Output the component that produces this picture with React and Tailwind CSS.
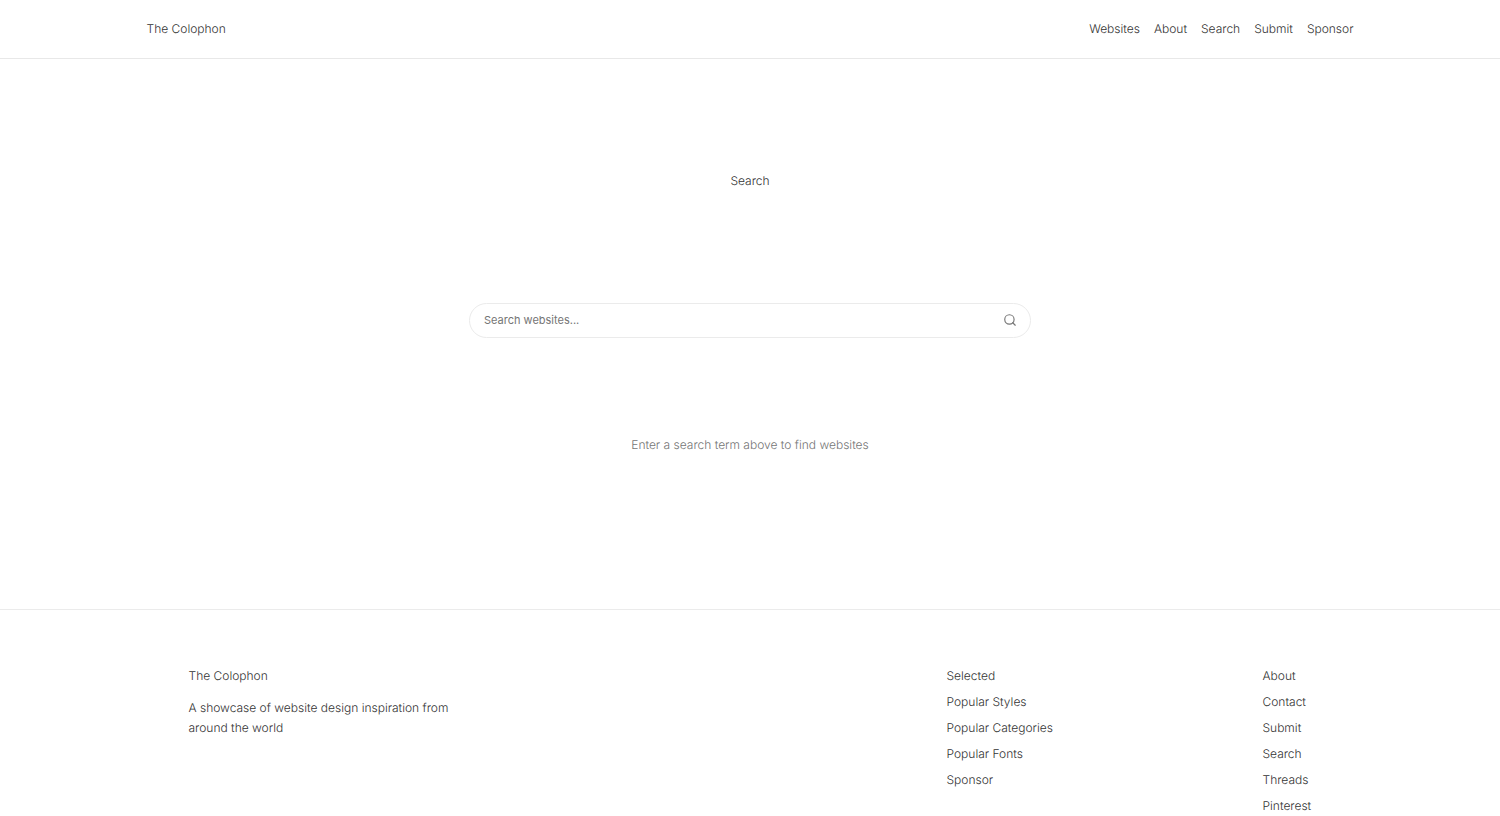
import React from "react";
import { Search } from "lucide-react";

const nav = ["Websites", "About", "Search", "Submit", "Sponsor"];
const selected = ["Popular Styles", "Popular Categories", "Popular Fonts", "Sponsor"];
const about = ["Contact", "Submit", "Search", "Threads", "Pinterest"];

function LinkColumn({ title, links }) {
  return (
    <div>
      <h2 className="mb-1.5">{title}</h2>
      <ul className="flex flex-col gap-1.5">
        {links.map((label) => (
          <li key={label}>
            <a href="#">{label}</a>
          </li>
        ))}
      </ul>
    </div>
  );
}

export default function App() {
  return (
    <div className="h-screen overflow-hidden bg-white font-['Inter',sans-serif] text-[12px] leading-5 font-light text-[#333333] [text-rendering:geometricPrecision]">
      <header className="border-b border-[#e8e8e8]">
        <div className="mx-auto flex max-w-[1207px] items-center justify-between py-[19px]">
          <a href="#">The Colophon</a>
          <nav className="flex gap-3.5">
            {nav.map((label) => (
              <a key={label} href="#">{label}</a>
            ))}
          </nav>
        </div>
      </header>

      <main className="flex flex-col items-center">
        <h1 className="mt-28">Search</h1>
        <form className="mt-28 flex h-[35px] w-full max-w-[562px] items-center rounded-full border border-[#ebebeb] pr-[13px] pb-px pl-3.5">
          <input
            type="search"
            aria-label="Search websites"
            placeholder="Search websites..."
            className="min-w-0 flex-1 bg-transparent text-[11px] font-normal outline-none placeholder:text-[#757575]"
          />
          <button type="button" aria-label="Search" className="text-[#777777]">
            <Search size={14} strokeWidth={2} />
          </button>
        </form>
        <p className="mt-[97px] mb-[154px] text-[#757575]">Enter a search term above to find websites</p>
      </main>

      <footer className="border-t border-[#ebebeb]">
        <div className="mx-auto flex max-w-[1123px] items-start py-14">
          <div className="flex-1">
            <h2>The Colophon</h2>
            <p className="mt-3 max-w-[280px]">A showcase of website design inspiration from around the world</p>
          </div>
          <div className="w-[316px]">
            <LinkColumn title="Selected" links={selected} />
          </div>
          <div className="w-[49px]">
            <LinkColumn title="About" links={about} />
          </div>
        </div>
      </footer>
    </div>
  );
}
